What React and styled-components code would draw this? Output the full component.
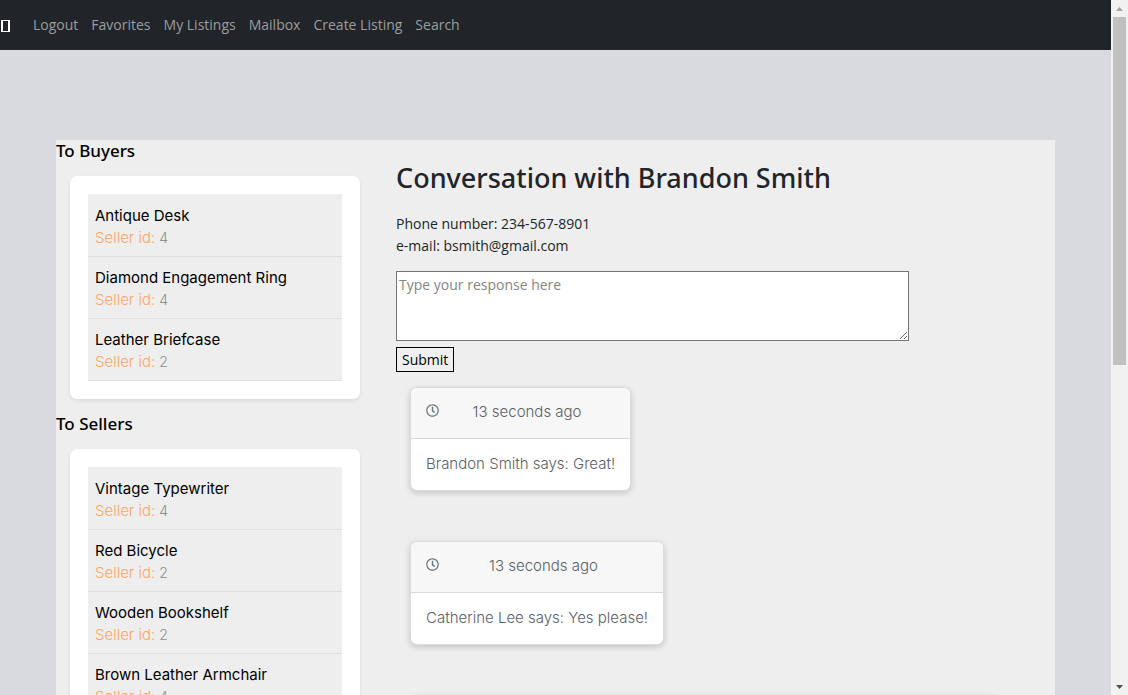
import React from "react";
import styled, { createGlobalStyle } from "styled-components";
import { FaRegClock } from "react-icons/fa";

const uiFont = `"Open Sans", "Noto Sans", sans-serif`;
const headingFont = `"Noto Sans", "Open Sans", sans-serif`;
const listFont = `Inter, "Open Sans", sans-serif`;

const GlobalStyle = createGlobalStyle`
  *, *::before, *::after { box-sizing: border-box; }
  body {
    margin: 0;
    background: #d9dadf;
    color: #212529;
    font-family: ${uiFont};
    font-size: 14px;
    line-height: 22px;
  }
  h1, h2, p, ul { margin: 0; padding: 0; }
`;

const Shell = styled.div`
  display: flex;
  height: 100vh;
  overflow: hidden;
`;

const Page = styled.div`
  flex: 1;
  min-width: 0;
  overflow: hidden;
`;

const NavBar = styled.nav`
  display: flex;
  align-items: center;
  height: 50px;
  background: #212529;
`;

const Brand = styled.a`
  display: block;
  width: 9px;
  height: 12px;
  margin: 2px 17px 0 1px;
  border: 2px solid #fff;
  border-width: 1px 2px;
`;

const NavLink = styled.a`
  padding: 0 7px 0 6px;
  color: #9b9d9e;
  text-decoration: none;
`;

const Panel = styled.div`
  display: flex;
  margin: 90px 56px 0;
  background: #eee;
`;

const Sidebar = styled.aside`
  flex: none;
  width: 304px;
`;

const GroupTitle = styled.h2`
  color: #000;
  font-family: ${headingFont};
  font-size: 17px;
  font-weight: 500;
  line-height: 22px;
`;

const GroupCard = styled.div`
  margin: 14px 0 14px 14px;
  padding: 18px;
  background: #fff;
  border-radius: 7px;
  box-shadow: 0 2px 4px rgba(0, 0, 0, 0.08);
`;

const ItemList = styled.ul`
  padding-top: 1px;
  background: #eee;
  list-style: none;
`;

const Item = styled.li`
  height: 62px;
  padding: 10px 7px 0;
  border-bottom: 1px solid #dee0e6;
  font-family: ${listFont};
  font-size: 15px;
`;

const ItemLink = styled.a`
  display: block;
  color: #000;
  text-decoration: none;
`;

const Seller = styled.p`
  color: #868e96;
  font-size: 14px;
  font-weight: 300;
`;

const SellerLabel = styled.span`
  color: #ffa562;
  font-size: 15px;
`;

const Main = styled.main`
  flex: 1;
  min-width: 0;
  padding: 21px 56px 0 36px;
`;

const Title = styled.h1`
  font-family: ${headingFont};
  font-size: 27px;
  font-weight: 500;
  line-height: 34px;
`;

const Contact = styled.p`
  margin-top: 18px;
`;

const ReplyForm = styled.form`
  display: flex;
  flex-direction: column;
  align-items: flex-start;
  gap: 6px;
  margin: 14px 0 15px;
`;

const ReplyBox = styled.textarea`
  width: 100%;
  max-width: 513px;
  height: 70px;
  padding: 2px;
  border: 1px solid #767676;
  border-radius: 0;
  background: #fff;
  font: inherit;
  &::placeholder { color: #858585; }
`;

const SubmitButton = styled.button`
  height: 25px;
  padding: 0 5px;
  border: 1px solid #000;
  background: #efefef;
  color: #000;
  font: inherit;
`;

const Messages = styled.div`
  display: flex;
  flex-direction: column;
  align-items: flex-start;
  gap: 50px;
  padding-left: 14px;
`;

const MessageCard = styled.article`
  min-width: ${({ $wide }) => ($wide ? "100%" : "0")};
  background: #fff;
  border: 1px solid #dcdcdc;
  border-radius: 7px;
  box-shadow: 0 2px 6px rgba(0, 0, 0, 0.18);
  color: #5a6068;
  font-family: ${listFont};
  font-size: 15px;
  font-weight: 300;
  overflow: hidden;
`;

const MessageHeader = styled.header`
  display: flex;
  align-items: center;
  height: 51px;
  padding: 0 15px 2px;
  background: #f7f7f7;
  border-bottom: 1px solid #d8d8d8;
`;

const ClockIcon = styled(FaRegClock)`
  flex: none;
  width: 13px;
  height: 13px;
  margin-bottom: 4px;
  color: #6c757d;
`;

const MessageTime = styled.time`
  flex: 1;
  text-align: center;
`;

const MessageText = styled.p`
  padding: 14px 15px 15px;
`;

const ScrollTrack = styled.div`
  display: flex;
  flex-direction: column;
  flex: none;
  align-items: center;
  width: 17px;
  background: #f1f1f1;
`;

const ScrollThumb = styled.div`
  width: 13px;
  height: 50vh;
  margin-bottom: auto;
  background: #c1c1c1;
`;

const links = ["Logout", "Favorites", "My Listings", "Mailbox", "Create Listing", "Search"];

const groups = [
  {
    title: "To Buyers",
    items: [
      ["Antique Desk", 4],
      ["Diamond Engagement Ring", 4],
      ["Leather Briefcase", 2],
    ],
  },
  {
    title: "To Sellers",
    items: [
      ["Vintage Typewriter", 4],
      ["Red Bicycle", 2],
      ["Wooden Bookshelf", 2],
      ["Brown Leather Armchair", 4],
    ],
  },
];

const messages = [
  { text: "Brandon Smith says: Great!" },
  { text: "Catherine Lee says: Yes please!" },
];

function ScrollArrow({ down }) {
  return (
    <svg width="17" height="17" viewBox="0 0 17 17" aria-hidden="true">
      {down ? <path d="M5 7h7L8.500 11z" fill="#505050" /> : <path d="M5 11h7L8.500 7z" fill="#a3a3a3" />}
    </svg>
  );
}

export default function App() {
  return (
    <>
      <GlobalStyle />
      <Shell>
        <Page>
          <NavBar>
            <Brand href="#" aria-label="Home" />
            {links.map((l) => (
              <NavLink href="#" key={l}>{l}</NavLink>
            ))}
          </NavBar>
          <Panel>
            <Sidebar>
              {groups.map((g) => (
                <section key={g.title}>
                  <GroupTitle>{g.title}</GroupTitle>
                  <GroupCard>
                    <ItemList>
                      {g.items.map(([name, id]) => (
                        <Item key={name}>
                          <ItemLink href="#">{name}</ItemLink>
                          <Seller><SellerLabel>Seller id:</SellerLabel> {id}</Seller>
                        </Item>
                      ))}
                    </ItemList>
                  </GroupCard>
                </section>
              ))}
            </Sidebar>
            <Main>
              <Title>Conversation with Brandon Smith</Title>
              <Contact>
                Phone number: 234-567-8901
                <br />
                e-mail: bsmith@gmail.com
              </Contact>
              <ReplyForm onSubmit={(e) => e.preventDefault()}>
                <ReplyBox aria-label="Response" placeholder="Type your response here" />
                <SubmitButton type="submit">Submit</SubmitButton>
              </ReplyForm>
              <Messages>
                {messages.map((m) => (
                  <MessageCard key={m.text}>
                    <MessageHeader>
                      <ClockIcon />
                      <MessageTime>13 seconds ago</MessageTime>
                    </MessageHeader>
                    <MessageText>{m.text}</MessageText>
                  </MessageCard>
                ))}
                <MessageCard $wide>
                  <MessageHeader />
                </MessageCard>
              </Messages>
            </Main>
          </Panel>
        </Page>
        <ScrollTrack aria-hidden="true">
          <ScrollArrow />
          <ScrollThumb />
          <ScrollArrow down />
        </ScrollTrack>
      </Shell>
    </>
  );
}
